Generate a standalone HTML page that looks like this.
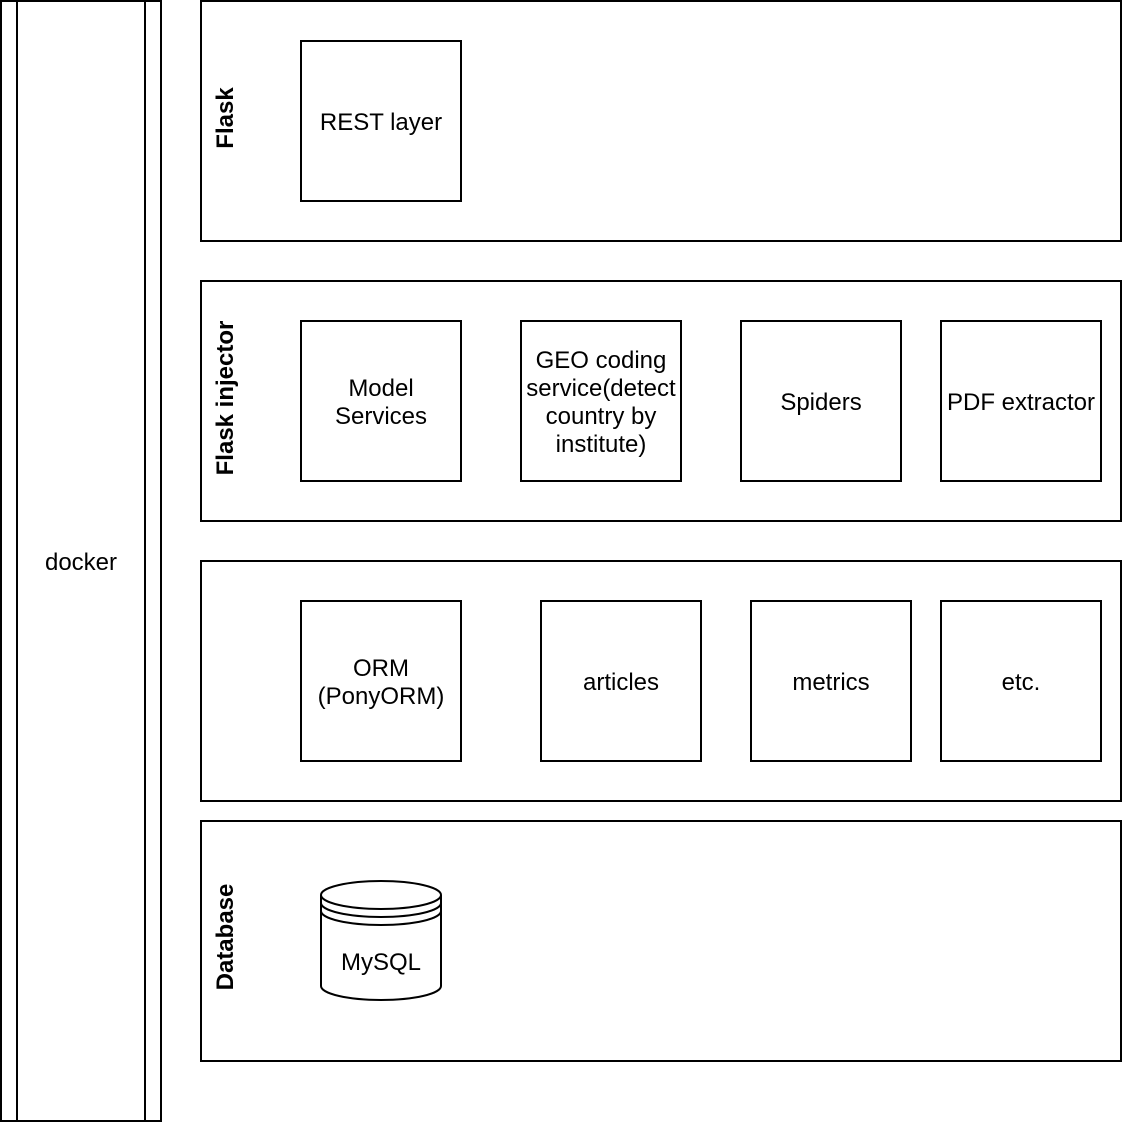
<!DOCTYPE html>
<html><head><meta charset="utf-8"><style>html,body{margin:0;padding:0;background:#fff;}svg{display:block}</style></head>
<body>
<svg width="1122" height="1122" viewBox="0 0 1122 1122" xmlns="http://www.w3.org/2000/svg" font-family="Liberation Sans, Arial, sans-serif" font-size="24" fill="none" stroke="#000" stroke-width="2">
<rect x="1" y="1" width="160" height="1120"/>
<line x1="17" y1="1" x2="17" y2="1121"/>
<line x1="145" y1="1" x2="145" y2="1121"/>
<rect x="201" y="1" width="920" height="240"/>
<rect x="201" y="281" width="920" height="240"/>
<rect x="201" y="561" width="920" height="240"/>
<rect x="201" y="821" width="920" height="240"/>
<rect x="301" y="41" width="160" height="160"/>
<rect x="301" y="321" width="160" height="160"/>
<rect x="521" y="321" width="160" height="160"/>
<rect x="741" y="321" width="160" height="160"/>
<rect x="941" y="321" width="160" height="160"/>
<rect x="301" y="601" width="160" height="160"/>
<rect x="541" y="601" width="160" height="160"/>
<rect x="751" y="601" width="160" height="160"/>
<rect x="941" y="601" width="160" height="160"/>
<path d="M321 895 A60 14 0 0 1 441 895 L441 986 A60 14 0 0 1 321 986 Z" fill="#fff"/>
<path d="M321 895 A60 14 0 0 0 441 895 M321 903 A60 14 0 0 0 441 903 M321 911 A60 14 0 0 0 441 911"/>
<g fill="#000" stroke="none" text-anchor="middle">
<text x="81" y="570">docker</text>
<text x="381" y="130">REST layer</text>
<text x="381" y="396">Model</text><text x="381" y="424">Services</text>
<text x="601" y="368">GEO coding</text><text x="601" y="396">service(detect</text><text x="601" y="424">country by</text><text x="601" y="452">institute)</text>
<text x="821" y="410">Spiders</text>
<text x="1021" y="410">PDF extractor</text>
<text x="381" y="676">ORM</text><text x="381" y="704">(PonyORM)</text>
<text x="621" y="690">articles</text>
<text x="831" y="690">metrics</text>
<text x="1021" y="690">etc.</text>
<text x="381" y="970">MySQL</text>
<g font-weight="bold">
<text transform="translate(233,118) rotate(-90)">Flask</text>
<text transform="translate(233,398) rotate(-90)">Flask injector</text>
<text transform="translate(233,937) rotate(-90)">Database</text>
</g>
</g>
</svg>
</body></html>
